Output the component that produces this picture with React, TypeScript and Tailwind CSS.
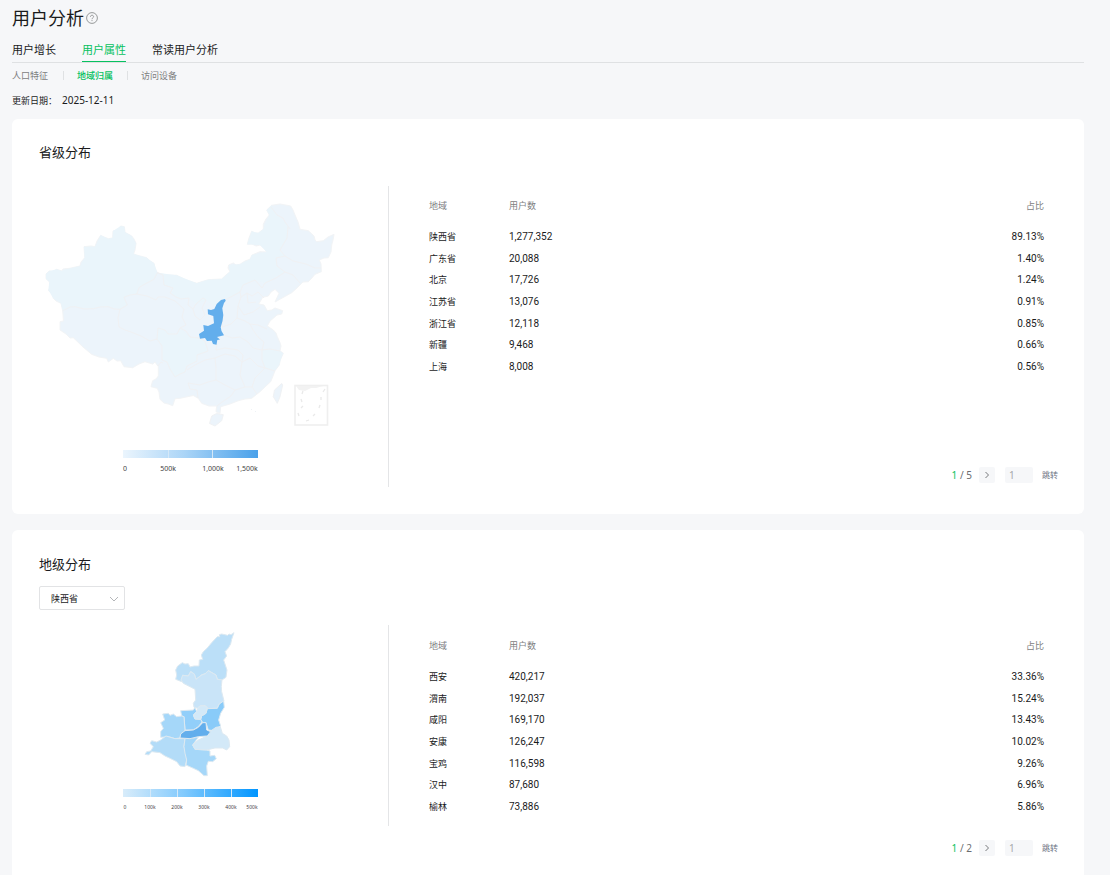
import React from "react";

type Region = { name: string; users: string; share: string };

const provinces: Region[] = [
  { name: "陕西省", users: "1,277,352", share: "89.13%" },
  { name: "广东省", users: "20,088", share: "1.40%" },
  { name: "北京", users: "17,726", share: "1.24%" },
  { name: "江苏省", users: "13,076", share: "0.91%" },
  { name: "浙江省", users: "12,118", share: "0.85%" },
  { name: "新疆", users: "9,468", share: "0.66%" },
  { name: "上海", users: "8,008", share: "0.56%" },
];

const cities: Region[] = [
  { name: "西安", users: "420,217", share: "33.36%" },
  { name: "渭南", users: "192,037", share: "15.24%" },
  { name: "咸阳", users: "169,170", share: "13.43%" },
  { name: "安康", users: "126,247", share: "10.02%" },
  { name: "宝鸡", users: "116,598", share: "9.26%" },
  { name: "汉中", users: "87,680", share: "6.96%" },
  { name: "榆林", users: "73,886", share: "5.86%" },
];

type Tick = { x: number; label: string };

function Legend({ id, y, from, mid, to, dividers, ticks, size }: {
  id: string; y: number; from: string; mid: string; to: string; dividers: number[]; ticks: Tick[]; size: number;
}) {
  return (
    <g>
      <defs>
        <linearGradient id={id}>
          <stop offset="0" stopColor={from} />
          <stop offset="0.45" stopColor={mid} />
          <stop offset="1" stopColor={to} />
        </linearGradient>
      </defs>
      <rect x="123" y={y} width="135" height="8" fill={`url(#${id})`} />
      {dividers.map((x) => (
        <rect key={x} x={x} y={y} width="1" height="8" fill="#d5e8f7" />
      ))}
      {ticks.map((t) => (
        <text key={t.label} x={t.x} y={y + (size > 6 ? 21 : 20)} fontSize={size} textAnchor="middle" fill="#444">
          {t.label}
        </text>
      ))}
    </g>
  );
}

const chinaOutline =
  "M46 274 L49.3 271 53 271.5 56.7 269.3 61.7 271 63 269 70 268.3 80 266 81 262 84.7 257.7 84 246.7 91 246 95 246.7 97 241 100.7 235.3 104 237 108.3 238.7 112.7 238 113 231 118.3 229.7 120.7 226 124.3 226.7 125 232.3 131.7 236 134 239 136 243.3 135 250 133.5 254 140 256 146.7 257.7 150 261 154 263.3 155 268 157.3 272.7 166 275 176.7 275.3 186 280 196.7 283.3 208.3 279.7 221.7 279 226 275 230 271.7 228 268 228.7 265 233.3 263 236 265 240 264.3 245 261 250 259.3 252 255 260 251.7 266.7 252 264 248 260 245 256 246 252 244 247.3 244.3 249 238 251.7 231.3 255 233 258.3 233 263.3 229.3 263.3 224.3 266 219 269.3 215 266.7 210 271.7 205.3 280 204 290.7 206 293 210 295 215 298 222 300 229.3 308.3 230.7 314 236 315 240 316.7 241.7 323.3 240.7 328 237 334 234.3 333 240 331.7 245 331 252 328.3 257.7 324 258 319.3 260 321 264 321.3 271.7 315 274.3 311 279 308.3 281.7 303 282 301.7 283.3 297 288 291.7 292.7 284 297 275 302 279 293.3 275 289.3 271 292 268.3 296 262.7 297.3 258.7 304 264 305 267.3 310.7 271.7 310 275 308 282.7 310.7 281.7 314 277 315 273.3 318.3 270 321 267.3 326 273.3 330 276 333 277.3 336.7 280 342.7 281 346 280 350.7 283.3 353.3 281 358.3 280 361 279.3 365 275 370.7 273 376 270.7 381.7 266 386 260 391.7 251.7 398.3 245 399 238.3 400.7 230 404 220.7 406.7 220 413.3 216 411.7 216.7 406 209 406 201.7 403.3 198.3 398.3 193.3 395.5 186 397 180 398.3 175 398.7 172.7 405.7 168.3 404 164 403 160 399.3 159 392 157.3 388.3 151 386.7 152.7 380.7 156 379 158.3 376 158.3 366.7 155 362 152.7 364 145 361.7 139 364 132.7 367.7 124 366.7 120.7 360.7 117 361 113.3 358.3 108.3 362 106.7 358.3 99 357 91.7 354.3 83 347 73.3 337.7 70 338 66 334 60 330 60 321.7 63.5 321 62.7 310.7 61 303.3 56 301 53.3 298.3 52 294 48.3 290 50.7 289 49.3 281.7 46 278.7 Z";

const chinaPaleRegions = [
  "M46 274 L49.3 271 56.7 269.3 61.7 271 70 268.3 80 266 84.7 257.7 84 246.7 95 246.7 100.7 235.3 108.3 238.7 112.7 238 113 231 120.7 226 124.3 226.7 125 232.3 131.7 236 136 243.3 133.5 254 146.7 257.7 154 263.3 157.3 272.7 154 279.3 145 284 139.3 287.3 136.7 294 124 297.3 127.3 305 120 309.3 108.3 306.7 93.3 308.7 75 306.7 62.7 310.7 61 303.3 53.3 298.3 48.3 290 49.3 281.7 46 278.7 Z",
  "M157.3 272.7 L176.7 275.3 196.7 283.3 208.3 279.7 221.7 279 230 271.7 228.7 265 240 264.3 250 259.3 252 255 266.7 252 260 245 247.3 244.3 251.7 231.3 258.3 233 263.3 229.3 269.3 215 266.7 210 271.7 205.3 277 215 285 222 288 227 287 238 280 250 285 256 276 258 277 266 285 272 265 283 255 280 243 285 240 292 225 300 214 306 206 300 196 304 189 298 181 299 172 295 173 288 164 285 163 275 Z",
  "M157 339 L162 346 162 360 167 362 172 374 175 377 185 372 187 366 197 361 197 355 208 351 205 341 199 338 190 337 180 328 177 334 165 330 158 328 Z",
  "M262 350 L270 349 280 351 283 353.3 279 365 275 370.7 265 368 262 360 Z",
];

const chinaBorders = [
  "M62.7 310.7 L70 307 75 306.7 84 309 93.3 308.7 100 307 108.3 306.7 114 309 120 309.3 127.3 305 124 297.3 130 295 136.7 294 139.3 287.3 145 284 154 279.3 157.3 272.7",
  "M120 309 L118 318 119 327 125 330 131 332 141 336 150 341 157 339 158 328 165 330 168 334 177 334 180 328 186 325 182 317 184 309 175 301 165 297 158 297 156 300 147 296 136.7 294",
  "M157.3 272.7 L163 275 164 285 173 288 170 293 176 297 181 299 189 298 188 305 193 309 196 304 203 298 206 300 202 308 205 315 200 320 195 316 193 309",
  "M157 339 L162 346 162 360 167 362 170 369 175 377 180 374 185 372 187 366 197 361 197 355 208 351 205 341 199 338 190 337 186 331 180 328",
  "M158 366 L161 362 163 363 M187 370 L195 365 205 360 215 358 216 368 216 380 208 382 200 385 188 383 190 389 197 390 198 398",
  "M215 358 L225 354 235 356 242 362 240 375 245 387 235 390 225 385 216 380 M217 344 L216 350 225 348 238 350 243 355 242 362",
  "M242 362 L250 358 258 366 265 368 275 371 M265 368 L255 378 252 387 257 394 M245 387 L252 387 M235 390 L231 396 222 402 217 406",
  "M224 335 L232 338 240 337 248 342 253 348 262 350 264 342 258 337 253 330 250 324 258 325 267 329 M262 350 L270 349 280 351 M262 350 L262 360 265 368",
  "M223 315 L222 327 231 324 237 318 238 306 241 297 240 292 M237 318 L245 321 250 324 M241 297 L247 293 252 296 258 292 264 298 M247 293 L248 303 256 302 M238 306 L244 315 253 312 260 307",
  "M285 256 L293 261 306 264 315 268 321 268 M285 272 L293 275 300 283 M288 227 L287 238 280 250 285 256 276 258 277 266 285 272 276 278 265 283 262 288 255 280 243 285 240 292 225 300",
  "M271 207 L277 215 283 218 285 222 290 229",
];

function ChinaMap() {
  return (
    <svg viewBox="12 186 376 301" className="block w-full font-['Noto_Sans',sans-serif]" role="img" aria-label="省级分布地图">
      <path d={chinaOutline} fill="#ecf4fb" stroke="#f2f4f6" strokeWidth="1" strokeLinejoin="round" />
      {chinaPaleRegions.map((d) => (
        <path key={d} d={d} fill="#eaf5fb" />
      ))}
      <g fill="none" stroke="#f0f1f3" strokeWidth="1" strokeLinejoin="round">
        {chinaBorders.map((d) => (
          <path key={d} d={d} />
        ))}
      </g>
      <path d="M211.7 416 L216.7 413.5 223.3 414.7 221.7 420.7 215 426 209.5 423.5 Z" fill="#ecf4fb" stroke="#f0f2f4" />
      <path d="M281.7 383.5 L282.7 385 280 396.7 277.3 403.3 273.3 396.7 274.5 390 Z" fill="#ecf4fb" stroke="#f0f2f4" />
      <path d="M251 409 l1 1 M255 411 l1 1" stroke="#eef2f5" />
      <path
        d="M225 299 L221 300 216.7 304 214.3 309 211 310 207.7 309.3 208 314.3 213.3 316 214 323.3 208 326 203.3 325 204 330.7 199 334 200 338.7 205 338 207 341 211.7 340.7 213 344 216.5 344.7 217.3 340 220 339.5 217 337 224 335.3 221.5 331 220.7 327.3 222.5 321 223.3 315 222.3 308.3 224 303 225.7 300.7 Z"
        fill="#63aeec"
      />
      <rect x="295" y="385.5" width="32.5" height="39.5" fill="none" stroke="#efefef" strokeWidth="1.6" />
      <path d="M296 386 L323 386 316 388 311 388 305 391 299 390 Z" fill="#f2f2f2" />
      <path d="M303 391 l-1 3 M301 399 l1 3 M303 406 l-2 2 M298 413 l1 3 M306 421 l3 -1 M313 416 l2 -2 M319 408 l1 -3 M321 400 l0 -3 M323 392 l2 -3" stroke="#e9e9e9" strokeWidth="1.3" />
      <Legend
        id="province-scale"
        y={450}
        from="#ebf5fd"
        mid="#abd5f7"
        to="#4aa1ea"
        dividers={[168, 212]}
        ticks={[{ x: 125, label: "0" }, { x: 168, label: "500k" }, { x: 213, label: "1,000k" }, { x: 247, label: "1,500k" }]}
        size={7}
      />
    </svg>
  );
}

const cityShapes = [
  { fill: "#bbdff8", d: "M312 38 L303 44 297 42 293 46 275 42 268 44 269 50 262 50 245 68 232 84 220 95 214 105 218 118 208 120 207 138 192 138 180 141 175 131 165 132 157 128 143 138 137 150 140 165 137 178 155 185 158 166 175 168 182 155 193 162 198 178 215 165 226 161 235 152 258 165 262 178 276 180 288 172 291 150 281 120 290 108 285 95 295 84 302 72 305 58 Z" },
  { fill: "#c9e4f8", d: "M158 166 L175 168 182 155 193 162 198 178 215 165 226 161 235 152 258 165 262 178 276 180 274 200 275 215 282 243 268 252 262 265 232 266 225 257 210 258 203 265 192 262 190 250 197 240 195 208 180 200 160 190 153 180 Z" },
  { fill: "#89cbf9", d: "M281 243 L283 262 272 280 266 300 272 318 250 332 235 330 228 308 218 308 212 298 215 288 228 280 232 266 262 265 268 252 Z" },
  { fill: "#92cffa", d: "M152 272 L190 270 195 262 200 275 190 285 195 297 212 298 216 306 205 320 190 330 165 330 162 290 155 288 Z" },
  { fill: "#d3e9f8", d: "M210 258 L225 257 232 262 228 280 215 288 212 298 195 297 190 285 200 275 205 262 Z" },
  { fill: "#a5d7f9", d: "M98 282 L115 280 120 286 130 282 140 290 155 288 162 290 165 330 163 340 152 345 150 354 135 356 115 350 92 352 92 335 100 325 92 308 104 300 Z" },
  { fill: "#b3dcf8", d: "M65 362 L80 366 92 360 108 348 135 356 165 356 162 380 168 400 170 420 165 440 150 438 140 425 120 415 105 408 90 398 65 395 56 405 45 403 50 395 62 393 70 380 60 370 Z" },
  { fill: "#a5d7f9", d: "M165 356 L205 352 188 375 195 388 230 390 240 393 240 408 254 406 259 416 248 425 235 424 230 438 232 467 222 467 205 452 190 445 168 435 170 420 165 400 162 380 Z" },
  { fill: "#d3e9f8", d: "M242 333 L258 322 271 320 277 340 290 348 297 360 299 380 290 390 278 384 255 384 230 390 195 388 188 375 205 360 232 348 Z" },
  { fill: "#63aeec", d: "M218 308 L228 308 230 330 242 335 232 348 205 350 180 356 150 354 152 342 165 332 190 330 205 322 Z" },
];

function ShaanxiMap() {
  return (
    <svg viewBox="12 625 376 201" className="block w-full font-['Noto_Sans',sans-serif]" role="img" aria-label="地级分布地图">
      <g transform="translate(130 620) scale(0.3333)" stroke="#dde9f1" strokeWidth="3" strokeLinejoin="round">
        {cityShapes.map((c) => (
          <path key={c.d} d={c.d} fill={c.fill} />
        ))}
      </g>
      <Legend
        id="city-scale"
        y={789}
        from="#d8ecfa"
        mid="#82cafd"
        to="#0095ff"
        dividers={[150, 177, 204, 231]}
        ticks={[
          { x: 125, label: "0" },
          { x: 150, label: "100k" },
          { x: 177, label: "200k" },
          { x: 204, label: "300k" },
          { x: 231, label: "400k" },
          { x: 252, label: "500k" },
        ]}
        size={5}
      />
    </svg>
  );
}

function RegionTable({ rows, label }: { rows: Region[]; label: string }) {
  return (
    <table aria-label={label} className="w-full table-fixed border-collapse text-left">
      <thead>
        <tr className="h-[30px] align-top text-[9px] leading-5 text-[#7e8081]">
          <th className="w-20 p-0 font-normal">地域</th>
          <th className="p-0 font-normal">用户数</th>
          <th className="w-24 p-0 text-right font-normal">占比</th>
        </tr>
      </thead>
      <tbody className="h-[152px]">
        {rows.map((r) => (
          <tr key={r.name}>
            <td className="p-0 text-[9px] leading-5">{r.name}</td>
            <td className="p-0 font-['Roboto','Noto_Sans',sans-serif] text-[10px] leading-5">{r.users}</td>
            <td className="p-0 text-right font-['Roboto','Noto_Sans',sans-serif] text-[10px] leading-5">{r.share}</td>
          </tr>
        ))}
      </tbody>
    </table>
  );
}

function Pager({ total, label }: { total: number; label: string }) {
  return (
    <nav aria-label={label} className="flex h-4 items-center justify-end text-[10px] text-[#6b6d70]">
      <span className="whitespace-pre">
        <span className="text-[#07c160]">1</span> / {total}
      </span>
      <button type="button" aria-label="下一页" className="ml-[7px] flex size-4 items-center justify-center rounded-xs bg-[#f6f7f9]">
        <svg viewBox="0 0 8 8" className="size-2" fill="none" stroke="#77797c" strokeWidth="1">
          <path d="M2.5 1 L5.5 4 L2.5 7" />
        </svg>
      </button>
      <input aria-label="页码" placeholder="1" className="ml-[10px] h-4 w-7 rounded-xs bg-[#f6f7f9] px-1 text-[10px] outline-none placeholder:text-[#a5a7aa]" />
      <button type="button" className="ml-[9px] text-[8px] text-[#6c7183]">跳转</button>
    </nav>
  );
}

export default function App() {
  return (
    <main className="flex min-h-screen flex-col bg-[#f6f7f9] pr-[26px] pl-3 font-['Noto_Sans','Noto_Sans_CJK_SC',sans-serif] text-[#1a1b1c]">
      <header className="flex h-9 items-center gap-[2px]">
        <h1 className="text-[18px] leading-6 font-normal">用户分析</h1>
        <button type="button" aria-label="帮助">
          <svg viewBox="0 0 12 12" className="size-3" fill="none" stroke="#8c8e90" strokeWidth="0.9">
            <circle cx="6" cy="6" r="5.4" />
            <path d="M4.4 4.8 C4.4 2.7 7.6 2.7 7.6 4.7 C7.6 5.8 6 5.8 6 7.2 M6 8.1 V9.1" />
          </svg>
        </button>
      </header>
      <nav aria-label="用户分析" className="flex h-[27px] gap-[26px] border-b border-[#dfe1e3] text-[11px] leading-[22px]">
        <a href="#growth" className="pt-[3px]">用户增长</a>
        <a href="#attributes" aria-current="page" className="border-b border-[#07c160] pt-[3px] text-[#07c160]">用户属性</a>
        <a href="#readers" className="pt-[3px]">常读用户分析</a>
      </nav>
      <nav aria-label="用户属性" className="flex h-6 items-center text-[9px] text-[#7e8081]">
        <a href="#population" className="w-[51px] leading-[9px]">人口特征</a>
        <a href="#region" aria-current="page" className="w-16 border-l border-[#dfe1e3] pl-[13px] leading-[9px] font-medium text-[#07c160]">地域归属</a>
        <a href="#device" className="border-l border-[#dfe1e3] pl-[13px] leading-[9px]">访问设备</a>
      </nav>
      <p className="flex h-[27px] items-center gap-[5px] text-[9px]">
        <span>更新日期：</span>
        <time className="text-[10px]">2025-12-11</time>
      </p>

      <section className="mt-[5px] rounded-md bg-white pt-[23px] pb-[27px]">
        <h2 className="ml-[27px] text-[13px] leading-5 font-normal">省级分布</h2>
        <div className="mt-6 flex">
          <div className="w-[377px] shrink-0 border-r border-[#e4e5e7]">
            <ChinaMap />
          </div>
          <div className="flex flex-1 flex-col justify-between pt-[10px] pr-[26px] pb-1 pl-10">
            <div className="pr-[14px]">
              <RegionTable rows={provinces} label="省级分布" />
            </div>
            <Pager total={5} label="省级分布分页" />
          </div>
        </div>
      </section>

      <section className="mt-4 flex-1 rounded-t-md bg-white pt-6 pb-[19px]">
        <h2 className="ml-[27px] text-[13px] leading-5 font-normal">地级分布</h2>
        <div className="relative mt-3 ml-[27px] w-[86px]">
          <select aria-label="省份" defaultValue="陕西省" className="block h-6 w-full appearance-none rounded-xs border border-[#e2e3e5] bg-white pt-px pl-[11px] text-[9px]">
            <option>陕西省</option>
            <option>广东省</option>
            <option>江苏省</option>
          </select>
          <svg viewBox="0 0 10 10" className="pointer-events-none absolute top-2 right-[6px] size-[10px]" fill="none" stroke="#b4b6b9" strokeWidth="1">
            <path d="M1 3 L5 7 L9 3" />
          </svg>
        </div>
        <div className="mt-[15px] flex items-start">
          <div className="w-[377px] shrink-0 border-r border-[#e4e5e7]">
            <ShaanxiMap />
          </div>
          <div className="flex-1 pt-[11px] pr-[26px] pl-10">
            <div className="pr-[14px]">
              <RegionTable rows={cities} label="地级分布" />
            </div>
            <div className="mt-[22px]">
              <Pager total={2} label="地级分布分页" />
            </div>
          </div>
        </div>
      </section>
    </main>
  );
}
